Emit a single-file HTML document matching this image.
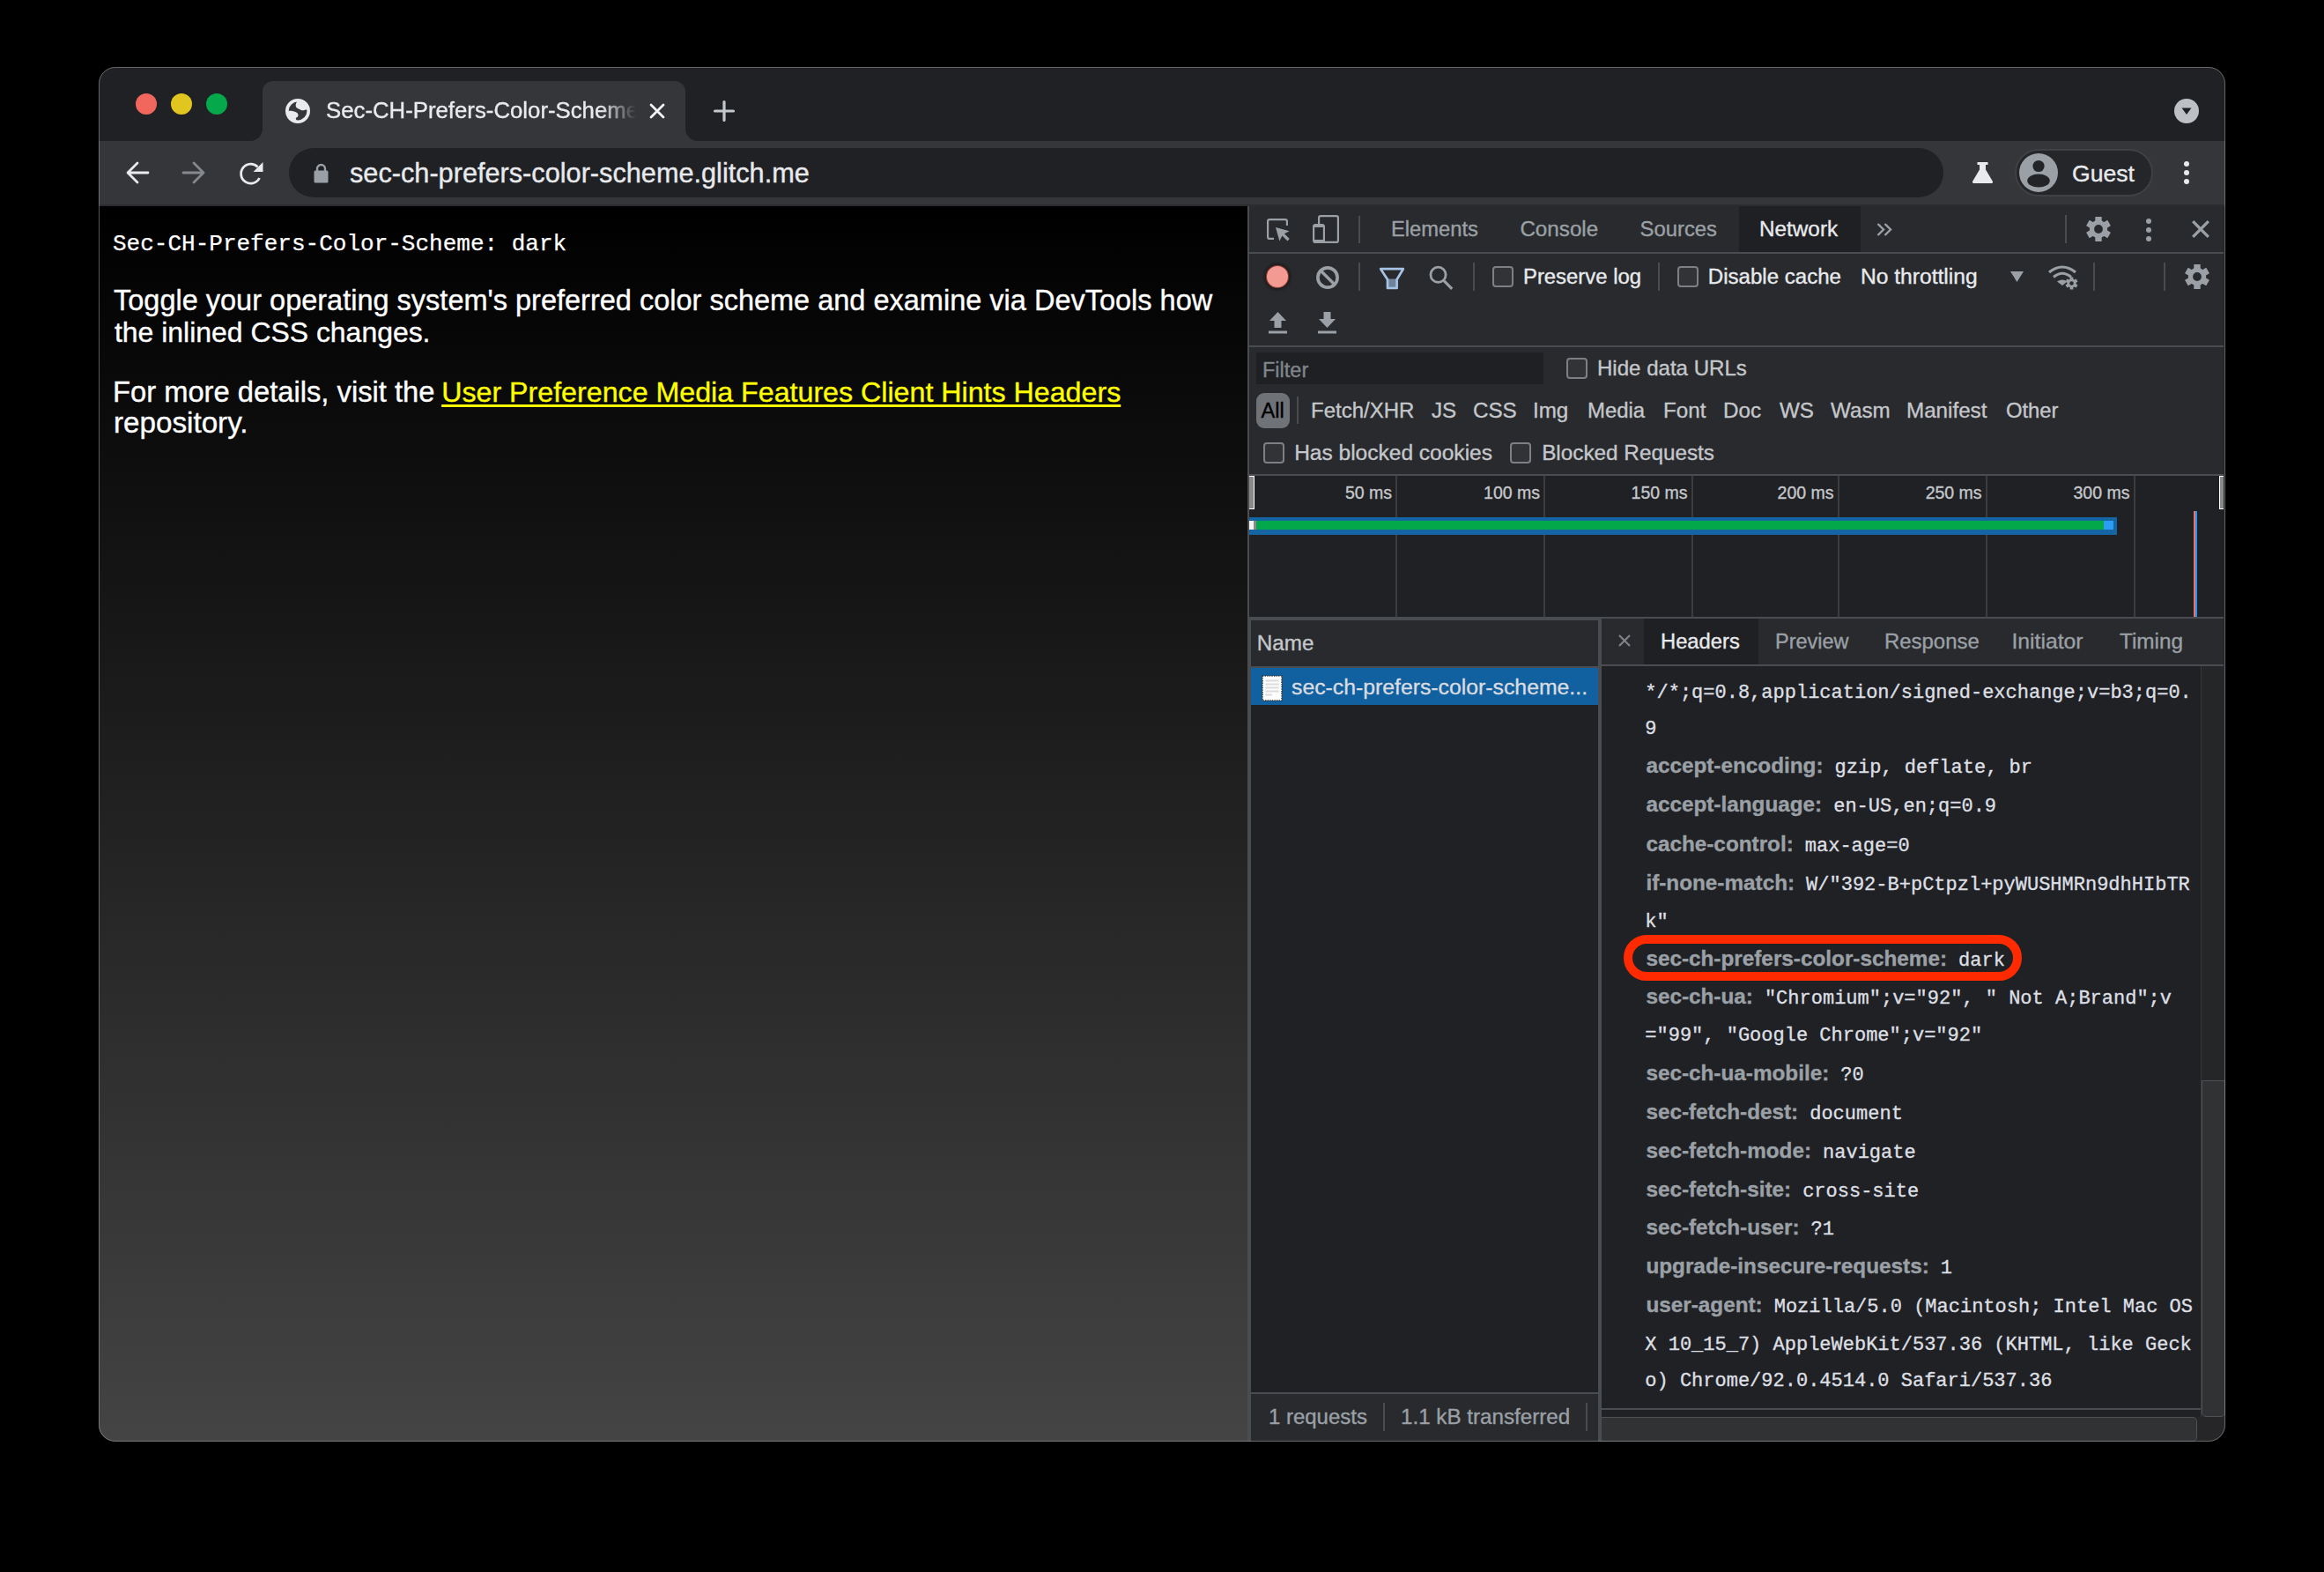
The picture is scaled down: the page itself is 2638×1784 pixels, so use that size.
<!DOCTYPE html>
<html><head><meta charset="utf-8">
<style>
*{box-sizing:border-box;margin:0;padding:0}
html,body{width:2638px;height:1784px;background:#000;overflow:hidden;font-family:'Liberation Sans',sans-serif;}
.a{position:absolute}
svg{position:absolute;overflow:visible}
#win{position:absolute;left:112px;top:76px;width:2414px;height:1560px;border-radius:19px;overflow:hidden;background:#202124}
#in{position:absolute;left:-112px;top:-76px;width:2638px;height:1784px}
#winborder{position:absolute;left:112px;top:76px;width:2414px;height:1560px;border-radius:19px;border:1.5px solid rgba(170,170,170,.5);pointer-events:none}
.t{position:absolute;white-space:nowrap;line-height:1;-webkit-text-stroke:0.35px currentColor}
.mk{display:inline-block;width:0;height:0}
</style></head><body>
<div id="win"><div id="in">
<div class="a" style="left:112px;top:76px;width:2414px;height:84px;background:#202124;"></div>
<div class="a" style="left:154px;top:106px;width:24px;height:24px;background:#f2675d;border-radius:50%"></div>
<div class="a" style="left:194px;top:106px;width:24px;height:24px;background:#e1c61f;border-radius:50%"></div>
<div class="a" style="left:234px;top:106px;width:24px;height:24px;background:#05a84a;border-radius:50%"></div>
<div class="a" style="left:284px;top:146px;width:14px;height:14px;background:radial-gradient(circle at 0 0, #202124 13.6px, #35363a 14.4px);"></div>
<div class="a" style="left:778px;top:146px;width:14px;height:14px;background:radial-gradient(circle at 100% 0, #202124 13.6px, #35363a 14.4px);"></div>
<div class="a" style="left:298px;top:92px;width:480px;height:68px;background:#35363a;border-radius:12px 12px 0 0"></div>
<svg style="left:324px;top:112px" width="28" height="28" viewBox="0 0 28 28"><circle cx="14" cy="14" r="12.2" fill="none" stroke="#e8eaed" stroke-width="3.6"/>
<path d="M14.5 2 C12.6 3.6 11.2 6.2 11.8 8.8 C12.3 10.8 14.5 11.2 16 12 C17.5 12.8 18.8 13.6 20.6 13.2 C22.2 12.9 23.6 12 26 12 A12 12 0 0 0 14.5 2 Z" fill="#e8eaed"/>
<path d="M2 13.8 C6 13.6 11 14 13.2 16 C15 17.5 15 20.5 12.8 21.3 C11.5 21.8 11.4 23.2 12.6 24.2 L14 26 A12 12 0 0 1 2 13.8 Z" fill="#e8eaed"/></svg>
<div class="t" id="t1" style="left:370.00px;top:113.00px;font-family:'Liberation Sans',sans-serif;font-size:25.77px;font-weight:400;color:#e8eaed;width:352px;overflow:hidden;-webkit-mask-image:linear-gradient(90deg,#000 0,#000 312px,rgba(0,0,0,.25) 342px,transparent 352px)">Sec-CH-Prefers-Color-Scheme</div>
<svg style="left:737px;top:117px" width="18" height="18" viewBox="0 0 18 18"><path d="M2 2 L16 16 M16 2 L2 16" stroke="#f1f3f4" stroke-width="2.8" stroke-linecap="round"/></svg>
<svg style="left:810px;top:114px" width="24" height="24" viewBox="0 0 24 24"><path d="M12 1.5 V22.5 M1.5 12 H22.5" stroke="#c4c7cb" stroke-width="3.2" stroke-linecap="round"/></svg>
<div class="a" style="left:2468px;top:112px;width:28px;height:28px;background:#bdc1c6;border-radius:50%"></div>
<svg style="left:2468px;top:112px" width="28" height="28" viewBox="0 0 28 28"><path d="M8.5 10.5 H19.5 L14 18 Z" fill="#202124"/></svg>
<div class="a" style="left:112px;top:160px;width:2414px;height:74px;background:#35363a;"></div>
<div class="a" style="left:112px;top:232px;width:2414px;height:2px;background:#2b2c2f;"></div>
<svg style="left:143px;top:183px" width="26" height="26" viewBox="0 0 26 26"><path d="M25 13 H3 M13 2 L2 13 L13 24" fill="none" stroke="#e8eaed" stroke-width="2.8" stroke-linecap="round" stroke-linejoin="round"/></svg>
<svg style="left:207px;top:183px" width="26" height="26" viewBox="0 0 26 26"><path d="M1 13 H23 M13 2 L24 13 L13 24" fill="none" stroke="#85888c" stroke-width="2.8" stroke-linecap="round" stroke-linejoin="round"/></svg>
<svg style="left:271px;top:183px" width="28" height="27" viewBox="0 0 28 27"><path d="M23.5 19 A11 11 0 1 1 21.5 6.5" fill="none" stroke="#e8eaed" stroke-width="2.8"/><path d="M27.5 1 V12 H16.5 Z" fill="#e8eaed"/></svg>
<div class="a" style="left:328px;top:168px;width:1878px;height:56px;background:#202124;border-radius:28px"></div>
<svg style="left:356px;top:185px" width="17" height="23" viewBox="0 0 17 23"><path d="M4 9 V6.5 A4.5 4.5 0 0 1 13 6.5 V9" fill="none" stroke="#9aa0a6" stroke-width="2.4"/><rect x="0.5" y="8.5" width="16" height="14" rx="1.5" fill="#9aa0a6"/></svg>
<div class="t" id="t2" style="left:397.00px;top:181.51px;font-family:'Liberation Sans',sans-serif;font-size:30.70px;font-weight:400;color:#e8eaed;">sec-ch-prefers-color-scheme.glitch.me</div>
<svg style="left:2238px;top:183px" width="25" height="26" viewBox="0 0 25 26"><path d="M6.5 1 H18.5 V4 H16 V9.5 L24 23 Q24.6 25 22.6 25 H2.4 Q0.4 25 1 23 L9 9.5 V4 H6.5 Z" fill="#e8eaed"/></svg>
<div class="a" style="left:2287px;top:169px;width:157px;height:54px;background:#252629;border-radius:27px;border:2.2px solid #404145"></div>
<svg style="left:2292px;top:174px" width="44" height="44" viewBox="0 0 44 44"><circle cx="22" cy="22" r="22" fill="#9aa0a6"/><circle cx="22" cy="14.5" r="6.6" fill="#232427"/><ellipse cx="22" cy="31" rx="12.8" ry="7.6" fill="#232427"/></svg>
<div class="t" id="t3" style="left:2352.00px;top:184.01px;font-family:'Liberation Sans',sans-serif;font-size:26.60px;font-weight:400;color:#e8eaed;">Guest</div>
<div class="a" style="left:2479px;top:183px;width:6px;height:6px;background:#e8eaed;border-radius:50%"></div>
<div class="a" style="left:2479px;top:193px;width:6px;height:6px;background:#e8eaed;border-radius:50%"></div>
<div class="a" style="left:2479px;top:203px;width:6px;height:6px;background:#e8eaed;border-radius:50%"></div>
<div class="a" style="left:112px;top:234px;width:1304px;height:1402px;background:linear-gradient(#000,#444);"></div>
<div class="t" id="t4" style="left:128.00px;top:264.00px;font-family:'Liberation Mono',monospace;font-size:26.03px;font-weight:400;color:#fff;-webkit-text-stroke:0.25px #fff">Sec-CH-Prefers-Color-Scheme: dark</div>
<div class="t" id="t5" style="left:129.00px;top:325.00px;font-family:'Liberation Sans',sans-serif;font-size:32.50px;font-weight:400;color:#fff;">Toggle your operating system's preferred color scheme and examine via DevTools how</div>
<div class="t" id="t6" style="left:130.00px;top:362.01px;font-family:'Liberation Sans',sans-serif;font-size:31.93px;font-weight:400;color:#fff;">the inlined CSS changes.</div>
<div class="t" id="t7" style="left:127.99px;top:428.51px;font-family:'Liberation Sans',sans-serif;font-size:32.73px;font-weight:400;color:#fff;">For more details, visit the</div>
<div class="t" id="t8" style="left:501.20px;top:428.51px;font-family:'Liberation Sans',sans-serif;font-size:32.20px;font-weight:400;color:#ffff00;"><span style="text-decoration:underline;text-decoration-thickness:2.5px;text-underline-offset:2.5px">User Preference Media Features Client Hints Headers</span></div>
<div class="t" id="t9" style="left:128.98px;top:462.80px;font-family:'Liberation Sans',sans-serif;font-size:33.21px;font-weight:400;color:#fff;">repository.</div>
<div class="a" style="left:1416px;top:234px;width:1110px;height:1402px;background:#202124;"></div>
<div class="a" style="left:1416px;top:234px;width:2px;height:1402px;background:#4a4c50;"></div>
<div class="a" style="left:1418px;top:234px;width:1106px;height:52px;background:#292a2d;"></div>
<div class="a" style="left:1418px;top:286px;width:1106px;height:2px;background:#494c50;"></div>
<svg style="left:1438px;top:248px" width="27" height="28" viewBox="0 0 27 28"><path d="M8 22.9 H3.1 Q1.1 22.9 1.1 20.9 V3.1 Q1.1 1.1 3.1 1.1 H20.9 Q22.9 1.1 22.9 3.1 V8" fill="none" stroke="#9aa0a6" stroke-width="2.2"/><path d="M10 10 L25.6 14.2 L19.9 17.2 L25.8 23 L23.4 25.4 L17.5 19.6 L14.4 25.6 Z" fill="#9aa0a6"/></svg>
<svg style="left:1490px;top:244px" width="31" height="33" viewBox="0 0 31 33"><rect x="7.1" y="1.1" width="21.8" height="29.8" rx="2" fill="none" stroke="#9aa0a6" stroke-width="2.2"/><rect x="1.1" y="11.1" width="11.8" height="19.8" rx="2" fill="#292a2d" stroke="#9aa0a6" stroke-width="2.2"/><rect x="1" y="11" width="12" height="3" fill="#9aa0a6"/><rect x="1" y="28" width="12" height="3" fill="#9aa0a6"/></svg>
<div class="a" style="left:1542px;top:245px;width:2px;height:31px;background:#494c50;"></div>
<div class="t" id="t10" style="left:1578.99px;top:249.21px;font-family:'Liberation Sans',sans-serif;font-size:23.74px;font-weight:400;color:#9aa0a6;">Elements</div>
<div class="t" id="t11" style="left:1725.39px;top:248.22px;font-family:'Liberation Sans',sans-serif;font-size:24.21px;font-weight:400;color:#9aa0a6;">Console</div>
<div class="t" id="t12" style="left:1861.60px;top:248.21px;font-family:'Liberation Sans',sans-serif;font-size:23.83px;font-weight:400;color:#9aa0a6;">Sources</div>
<div class="a" style="left:1974px;top:234px;width:138px;height:52px;background:#1f2023;"></div>
<div class="t" id="t13" style="left:1996.97px;top:248.22px;font-family:'Liberation Sans',sans-serif;font-size:24.32px;font-weight:400;color:#e8eaed;">Network</div>
<svg style="left:2130px;top:253px" width="18" height="15" viewBox="0 0 18 15"><path d="M1.5 1 L8 7.5 L1.5 14 M9.5 1 L16 7.5 L9.5 14" fill="none" stroke="#9aa0a6" stroke-width="2.4"/></svg>
<div class="a" style="left:2344px;top:244px;width:2px;height:32px;background:#494c50;"></div>
<svg style="left:2368px;top:246px" width="28" height="28" viewBox="0 0 28 28"><g transform="translate(14,14)" fill="#9aa0a6"><circle r="10.2"/><rect x="-3.7" y="-14" width="7.4" height="8" rx="0.6" transform="rotate(0)"/><rect x="-3.7" y="-14" width="7.4" height="8" rx="0.6" transform="rotate(60)"/><rect x="-3.7" y="-14" width="7.4" height="8" rx="0.6" transform="rotate(120)"/><rect x="-3.7" y="-14" width="7.4" height="8" rx="0.6" transform="rotate(180)"/><rect x="-3.7" y="-14" width="7.4" height="8" rx="0.6" transform="rotate(240)"/><rect x="-3.7" y="-14" width="7.4" height="8" rx="0.6" transform="rotate(300)"/><circle r="4.9" fill="#292a2d"/></g></svg>
<div class="a" style="left:2436px;top:248px;width:6px;height:6px;background:#9aa0a6;border-radius:50%"></div>
<div class="a" style="left:2436px;top:258px;width:6px;height:6px;background:#9aa0a6;border-radius:50%"></div>
<div class="a" style="left:2436px;top:268px;width:6px;height:6px;background:#9aa0a6;border-radius:50%"></div>
<svg style="left:2488px;top:250px" width="20" height="20" viewBox="0 0 20 20"><path d="M1.2 1.2 L18.8 18.8 M18.8 1.2 L1.2 18.8" stroke="#9aa0a6" stroke-width="3.3"/></svg>
<div class="a" style="left:1418px;top:288px;width:1106px;height:104px;background:#292a2d;"></div>
<div class="a" style="left:1418px;top:392px;width:1106px;height:2px;background:#494c50;"></div>
<div class="a" style="left:1432px;top:296px;width:36px;height:36px;background:radial-gradient(circle, rgba(20,20,22,.9) 0, rgba(20,20,22,.6) 50%, rgba(20,20,22,0) 70%);border-radius:50%"></div>
<div class="a" style="left:1438px;top:302px;width:24px;height:24px;background:#f39a93;border-radius:50%;box-shadow:0 0 0 1px rgba(230,80,70,.6)"></div>
<svg style="left:1494px;top:302px" width="26" height="26" viewBox="0 0 26 26"><circle cx="13" cy="13" r="11.1" fill="none" stroke="#9aa0a6" stroke-width="3.7"/><path d="M5.2 5.2 L20.8 20.8" stroke="#9aa0a6" stroke-width="3.5"/></svg>
<div class="a" style="left:1542px;top:298px;width:2px;height:32px;background:#494c50;"></div>
<svg style="left:1564px;top:302px" width="32" height="28" viewBox="0 0 32 28"><rect x="10.6" y="14.5" width="11.4" height="10.6" fill="#71839b"/><path d="M3.2 3.2 H28.8 L21.6 15.2 V25 H11 V15.2 Z" fill="none" stroke="#a6c2e4" stroke-width="2.7" stroke-linejoin="round"/></svg>
<svg style="left:1622px;top:302px" width="28" height="28" viewBox="0 0 28 28"><circle cx="10.5" cy="9.8" r="8.6" fill="none" stroke="#9aa0a6" stroke-width="2.8"/><path d="M16.8 16.3 L26.2 25.9" stroke="#9aa0a6" stroke-width="3.1"/></svg>
<div class="a" style="left:1672px;top:298px;width:2px;height:32px;background:#494c50;"></div>
<div class="a" style="left:1694px;top:302px;width:24px;height:24px;background:#323336;border:2px solid #7c8085;border-radius:4px"></div>
<div class="t" id="t14" style="left:1728.98px;top:302.00px;font-family:'Liberation Sans',sans-serif;font-size:23.88px;font-weight:400;color:#e8eaed;">Preserve log</div>
<div class="a" style="left:1882px;top:298px;width:2px;height:32px;background:#494c50;"></div>
<div class="a" style="left:1904px;top:302px;width:24px;height:24px;background:#323336;border:2px solid #7c8085;border-radius:4px"></div>
<div class="t" id="t15" style="left:1938.76px;top:302.01px;font-family:'Liberation Sans',sans-serif;font-size:24.08px;font-weight:400;color:#e8eaed;">Disable cache</div>
<div class="t" id="t16" style="left:2111.95px;top:302.01px;font-family:'Liberation Sans',sans-serif;font-size:24.63px;font-weight:400;color:#e8eaed;">No throttling</div>
<svg style="left:2282px;top:308px" width="15" height="12" viewBox="0 0 15 12"><path d="M0 0 H15 L7.5 12 Z" fill="#9aa0a6"/></svg>
<svg style="left:2324px;top:300px" width="35" height="29" viewBox="0 0 35 29"><path d="M2 9 Q17 -3 32 9" fill="none" stroke="#9aa0a6" stroke-width="3"/><path d="M7 14.5 Q17 6 27 14.5" fill="none" stroke="#9aa0a6" stroke-width="3"/><path d="M11 19.5 L17 24 L22.5 19.5 Q17 15.5 11 19.5 Z" fill="#9aa0a6"/><g transform="translate(27.5,21.5) scale(0.5)" fill="#9aa0a6"><circle r="10.2"/><rect x="-3.7" y="-14" width="7.4" height="8" rx="0.6" transform="rotate(0)"/><rect x="-3.7" y="-14" width="7.4" height="8" rx="0.6" transform="rotate(60)"/><rect x="-3.7" y="-14" width="7.4" height="8" rx="0.6" transform="rotate(120)"/><rect x="-3.7" y="-14" width="7.4" height="8" rx="0.6" transform="rotate(180)"/><rect x="-3.7" y="-14" width="7.4" height="8" rx="0.6" transform="rotate(240)"/><rect x="-3.7" y="-14" width="7.4" height="8" rx="0.6" transform="rotate(300)"/><circle r="4.6" fill="#292a2d"/></g></svg>
<div class="a" style="left:2376px;top:298px;width:2px;height:32px;background:#494c50;"></div>
<div class="a" style="left:2456px;top:298px;width:2px;height:32px;background:#494c50;"></div>
<svg style="left:2480px;top:300px" width="28" height="28" viewBox="0 0 28 28"><g transform="translate(14,14)" fill="#9aa0a6"><circle r="10.2"/><rect x="-3.7" y="-14" width="7.4" height="8" rx="0.6" transform="rotate(0)"/><rect x="-3.7" y="-14" width="7.4" height="8" rx="0.6" transform="rotate(60)"/><rect x="-3.7" y="-14" width="7.4" height="8" rx="0.6" transform="rotate(120)"/><rect x="-3.7" y="-14" width="7.4" height="8" rx="0.6" transform="rotate(180)"/><rect x="-3.7" y="-14" width="7.4" height="8" rx="0.6" transform="rotate(240)"/><rect x="-3.7" y="-14" width="7.4" height="8" rx="0.6" transform="rotate(300)"/><circle r="4.9" fill="#292a2d"/></g></svg>
<svg style="left:1440px;top:354px" width="21" height="25" viewBox="0 0 21 25"><path d="M10.5 0 L20 10 H14.5 V18 H6.5 V10 H1 Z" fill="#9aa0a6"/><rect x="0" y="21.5" width="21" height="3" fill="#9aa0a6"/></svg>
<svg style="left:1496px;top:354px" width="21" height="25" viewBox="0 0 21 25"><path d="M10.5 18 L20 8 H14.5 V0 H6.5 V8 H1 Z" fill="#9aa0a6"/><rect x="0" y="21.5" width="21" height="3" fill="#9aa0a6"/></svg>
<div class="a" style="left:1418px;top:394px;width:1106px;height:144px;background:#292a2d;"></div>
<div class="a" style="left:1418px;top:538px;width:1106px;height:2px;background:#494c50;"></div>
<div class="a" style="left:1426px;top:400px;width:326px;height:36px;background:#1f2023;"></div>
<div class="t" id="t17" style="left:1433.00px;top:408.70px;font-family:'Liberation Sans',sans-serif;font-size:23.50px;font-weight:400;color:#80868b;">Filter</div>
<div class="a" style="left:1778px;top:406px;width:24px;height:24px;background:#323336;border:2px solid #7c8085;border-radius:4px"></div>
<div class="t" id="t18" style="left:1812.98px;top:406.00px;font-family:'Liberation Sans',sans-serif;font-size:24.07px;font-weight:400;color:#c4c7cb;">Hide data URLs</div>
<div class="a" style="left:1426px;top:446px;width:38px;height:40px;background:#6f7276;border-radius:9px"></div>
<div class="t" id="t19" style="left:1431.50px;top:455.20px;font-family:'Liberation Sans',sans-serif;font-size:23.50px;font-weight:400;color:#000;">All</div>
<div class="a" style="left:1472px;top:450px;width:2px;height:31px;background:#494c50;"></div>
<div class="t" id="t20" style="left:1488.01px;top:454.22px;font-family:'Liberation Sans',sans-serif;font-size:23.99px;font-weight:400;color:#c4c7cb;">Fetch/XHR</div>
<div class="t" id="t21" style="left:1625.00px;top:454.21px;font-family:'Liberation Sans',sans-serif;font-size:24.20px;font-weight:400;color:#c4c7cb;">JS</div>
<div class="t" id="t22" style="left:1672.00px;top:454.21px;font-family:'Liberation Sans',sans-serif;font-size:24.20px;font-weight:400;color:#c4c7cb;">CSS</div>
<div class="t" id="t23" style="left:1740.00px;top:454.21px;font-family:'Liberation Sans',sans-serif;font-size:24.20px;font-weight:400;color:#c4c7cb;">Img</div>
<div class="t" id="t24" style="left:1802.01px;top:454.21px;font-family:'Liberation Sans',sans-serif;font-size:23.91px;font-weight:400;color:#c4c7cb;">Media</div>
<div class="t" id="t25" style="left:1888.00px;top:454.21px;font-family:'Liberation Sans',sans-serif;font-size:24.20px;font-weight:400;color:#c4c7cb;">Font</div>
<div class="t" id="t26" style="left:1956.00px;top:454.21px;font-family:'Liberation Sans',sans-serif;font-size:24.20px;font-weight:400;color:#c4c7cb;">Doc</div>
<div class="t" id="t27" style="left:2020.00px;top:454.21px;font-family:'Liberation Sans',sans-serif;font-size:24.20px;font-weight:400;color:#c4c7cb;">WS</div>
<div class="t" id="t28" style="left:2078.00px;top:454.21px;font-family:'Liberation Sans',sans-serif;font-size:24.20px;font-weight:400;color:#c4c7cb;">Wasm</div>
<div class="t" id="t29" style="left:2164.00px;top:454.21px;font-family:'Liberation Sans',sans-serif;font-size:24.20px;font-weight:400;color:#c4c7cb;">Manifest</div>
<div class="t" id="t30" style="left:2277.00px;top:454.22px;font-family:'Liberation Sans',sans-serif;font-size:23.80px;font-weight:400;color:#c4c7cb;">Other</div>
<div class="a" style="left:1434px;top:502px;width:24px;height:24px;background:#323336;border:2px solid #7c8085;border-radius:4px"></div>
<div class="t" id="t31" style="left:1469.14px;top:502.21px;font-family:'Liberation Sans',sans-serif;font-size:24.53px;font-weight:400;color:#c4c7cb;">Has blocked cookies</div>
<div class="a" style="left:1714px;top:502px;width:24px;height:24px;background:#323336;border:2px solid #7c8085;border-radius:4px"></div>
<div class="t" id="t32" style="left:1750.15px;top:502.20px;font-family:'Liberation Sans',sans-serif;font-size:24.30px;font-weight:400;color:#c4c7cb;">Blocked Requests</div>
<div class="a" style="left:1418px;top:540px;width:1106px;height:160px;background:#202124;"></div>
<div class="a" style="left:1418px;top:700px;width:1106px;height:2px;background:#494c50;"></div>
<div class="a" style="left:1418px;top:702px;width:400px;height:2px;background:#494c50;"></div>
<div class="a" style="left:1584px;top:540px;width:2px;height:160px;background:#3c3d40;"></div>
<div class="a" style="left:1752px;top:540px;width:2px;height:160px;background:#3c3d40;"></div>
<div class="a" style="left:1920px;top:540px;width:2px;height:160px;background:#3c3d40;"></div>
<div class="a" style="left:2086px;top:540px;width:2px;height:160px;background:#3c3d40;"></div>
<div class="a" style="left:2254px;top:540px;width:2px;height:160px;background:#3c3d40;"></div>
<div class="a" style="left:2422px;top:540px;width:2px;height:160px;background:#3c3d40;"></div>
<div class="t" id="t33" style="left:1580.00px;top:549.80px;font-family:'Liberation Sans',sans-serif;font-size:19.50px;font-weight:400;color:#c4c7cb;transform:translateX(-100%)">50 ms</div>
<div class="t" id="t34" style="left:1748.00px;top:549.80px;font-family:'Liberation Sans',sans-serif;font-size:19.50px;font-weight:400;color:#c4c7cb;transform:translateX(-100%)">100 ms</div>
<div class="t" id="t35" style="left:1915.50px;top:549.80px;font-family:'Liberation Sans',sans-serif;font-size:19.50px;font-weight:400;color:#c4c7cb;transform:translateX(-100%)">150 ms</div>
<div class="t" id="t36" style="left:2081.50px;top:549.80px;font-family:'Liberation Sans',sans-serif;font-size:19.50px;font-weight:400;color:#c4c7cb;transform:translateX(-100%)">200 ms</div>
<div class="t" id="t37" style="left:2249.60px;top:549.80px;font-family:'Liberation Sans',sans-serif;font-size:19.50px;font-weight:400;color:#c4c7cb;transform:translateX(-100%)">250 ms</div>
<div class="t" id="t38" style="left:2417.40px;top:549.80px;font-family:'Liberation Sans',sans-serif;font-size:19.50px;font-weight:400;color:#c4c7cb;transform:translateX(-100%)">300 ms</div>
<div class="a" style="left:1418px;top:540px;width:6px;height:38px;background:#8a8a8a;border:1.5px solid #fff;border-left:none"></div>
<div class="a" style="left:2519px;top:540px;width:5px;height:38px;background:#8a8a8a;border:1.5px solid #fff;border-right:none"></div>
<div class="a" style="left:1418px;top:587px;width:985px;height:20px;background:#1565a5;"></div>
<div class="a" style="left:1426px;top:591px;width:962px;height:10px;background:#03a84a;"></div>
<div class="a" style="left:1418px;top:591px;width:5px;height:10px;background:#f4f4f4;"></div>
<div class="a" style="left:1423px;top:591px;width:3px;height:10px;background:#8a8a8a;"></div>
<div class="a" style="left:2388px;top:591px;width:11px;height:10px;background:#2a9df4;"></div>
<div class="a" style="left:2490px;top:580px;width:2px;height:120px;background:#f27166;"></div>
<div class="a" style="left:2492px;top:580px;width:2px;height:120px;background:#2196f3;"></div>
<div class="a" style="left:1418px;top:704px;width:396px;height:52px;background:#292a2d;"></div>
<div class="a" style="left:1418px;top:756px;width:396px;height:2px;background:#494c50;"></div>
<div class="t" id="t39" style="left:1426.75px;top:717.81px;font-family:'Liberation Sans',sans-serif;font-size:24.23px;font-weight:400;color:#c4c7cb;">Name</div>
<div class="a" style="left:1418px;top:758px;width:396px;height:42px;background:#1160a0;"></div>
<svg style="left:1432px;top:766px" width="24" height="30" viewBox="0 0 24 30"><rect x="1" y="1" width="22" height="28" fill="#fdfdfd" stroke="#3a3a3a" stroke-width="1.6" stroke-dasharray="1.4 1.2"/><path d="M4.5 6.5 H19.5 M4.5 10.5 H19.5 M4.5 14.5 H19.5 M4.5 18.5 H19.5 M4.5 22.5 H12" stroke="#dcdcdc" stroke-width="2"/></svg>
<div class="t" id="t40" style="left:1466.00px;top:767.80px;font-family:'Liberation Sans',sans-serif;font-size:24.79px;font-weight:400;color:#dadce0;">sec-ch-prefers-color-scheme...</div>
<div class="a" style="left:1814px;top:702px;width:4px;height:934px;background:#494c50;"></div>
<div class="a" style="left:1418px;top:1580px;width:396px;height:2px;background:#494c50;"></div>
<div class="a" style="left:1418px;top:1582px;width:396px;height:54px;background:#292a2d;"></div>
<div class="t" id="t41" style="left:1439.98px;top:1595.72px;font-family:'Liberation Sans',sans-serif;font-size:23.97px;font-weight:400;color:#9aa0a6;">1 requests</div>
<div class="a" style="left:1570px;top:1592px;width:2px;height:32px;background:#494c50;"></div>
<div class="t" id="t42" style="left:1589.96px;top:1595.71px;font-family:'Liberation Sans',sans-serif;font-size:24.20px;font-weight:400;color:#9aa0a6;">1.1 kB transferred</div>
<div class="a" style="left:1800px;top:1592px;width:2px;height:32px;background:#494c50;"></div>
<div class="a" style="left:1818px;top:702px;width:706px;height:52px;background:#292a2d;"></div>
<div class="a" style="left:1818px;top:754px;width:706px;height:2px;background:#494c50;"></div>
<svg style="left:1837px;top:720px" width="14" height="14" viewBox="0 0 14 14"><path d="M1 1 L13 13 M13 1 L1 13" stroke="#7f8388" stroke-width="2.2"/></svg>
<div class="a" style="left:1866px;top:702px;width:130px;height:52px;background:#1f2023;"></div>
<div class="t" id="t43" style="left:1884.99px;top:715.81px;font-family:'Liberation Sans',sans-serif;font-size:23.77px;font-weight:400;color:#e8eaed;">Headers</div>
<div class="t" id="t44" style="left:2015.00px;top:716.80px;font-family:'Liberation Sans',sans-serif;font-size:23.50px;font-weight:400;color:#9aa0a6;">Preview</div>
<div class="t" id="t45" style="left:2138.98px;top:715.81px;font-family:'Liberation Sans',sans-serif;font-size:23.95px;font-weight:400;color:#9aa0a6;">Response</div>
<div class="t" id="t46" style="left:2283.42px;top:715.80px;font-family:'Liberation Sans',sans-serif;font-size:24.74px;font-weight:400;color:#9aa0a6;">Initiator</div>
<div class="t" id="t47" style="left:2406.00px;top:715.81px;font-family:'Liberation Sans',sans-serif;font-size:24.32px;font-weight:400;color:#9aa0a6;">Timing</div>
<div class="t" id="t48" style="left:1867.30px;top:776.31px;font-family:'Liberation Mono',monospace;font-size:22.00px;font-weight:400;color:#dcdfe3;">*/*;q=0.8,application/signed-exchange;v=b3;q=0.</div>
<div class="t" id="t49" style="left:1867.30px;top:817.01px;font-family:'Liberation Mono',monospace;font-size:22.00px;font-weight:400;color:#dcdfe3;">9</div>
<div class="t" id="t50" style="left:1868.40px;top:857.32px;font-family:'Liberation Sans',sans-serif;font-size:24.30px;font-weight:700;color:#9aa0a6;">accept-encoding:<span style="font-family:'Liberation Mono',monospace;font-size:22px;font-weight:400;color:#dcdfe3;margin-left:13px">gzip, deflate, br</span></div>
<div class="t" id="t51" style="left:1868.40px;top:901.41px;font-family:'Liberation Sans',sans-serif;font-size:24.30px;font-weight:700;color:#9aa0a6;">accept-language:<span style="font-family:'Liberation Mono',monospace;font-size:22px;font-weight:400;color:#dcdfe3;margin-left:13px">en-US,en;q=0.9</span></div>
<div class="t" id="t52" style="left:1868.40px;top:945.51px;font-family:'Liberation Sans',sans-serif;font-size:24.30px;font-weight:700;color:#9aa0a6;">cache-control:<span style="font-family:'Liberation Mono',monospace;font-size:22px;font-weight:400;color:#dcdfe3;margin-left:13px">max-age=0</span></div>
<div class="t" id="t53" style="left:1868.40px;top:989.60px;font-family:'Liberation Sans',sans-serif;font-size:24.30px;font-weight:700;color:#9aa0a6;">if-none-match:<span style="font-family:'Liberation Mono',monospace;font-size:22px;font-weight:400;color:#dcdfe3;margin-left:13px">W/"392-B+pCtpzl+pyWUSHMRn9dhHIbTR</span></div>
<div class="t" id="t54" style="left:1867.30px;top:1035.51px;font-family:'Liberation Mono',monospace;font-size:22.00px;font-weight:400;color:#dcdfe3;">k"</div>
<div class="t" id="t55" style="left:1868.40px;top:1075.60px;font-family:'Liberation Sans',sans-serif;font-size:24.30px;font-weight:700;color:#9aa0a6;">sec-ch-prefers-color-scheme:<span style="font-family:'Liberation Mono',monospace;font-size:22px;font-weight:400;color:#dcdfe3;margin-left:13px">dark</span></div>
<div class="t" id="t56" style="left:1868.40px;top:1119.32px;font-family:'Liberation Sans',sans-serif;font-size:24.30px;font-weight:700;color:#9aa0a6;">sec-ch-ua:<span style="font-family:'Liberation Mono',monospace;font-size:22px;font-weight:400;color:#dcdfe3;margin-left:13px">"Chromium";v="92", " Not A;Brand";v</span></div>
<div class="t" id="t57" style="left:1867.30px;top:1165.01px;font-family:'Liberation Mono',monospace;font-size:22.00px;font-weight:400;color:#dcdfe3;">="99", "Google Chrome";v="92"</div>
<div class="t" id="t58" style="left:1868.40px;top:1206.01px;font-family:'Liberation Sans',sans-serif;font-size:24.30px;font-weight:700;color:#9aa0a6;">sec-ch-ua-mobile:<span style="font-family:'Liberation Mono',monospace;font-size:22px;font-weight:400;color:#dcdfe3;margin-left:13px">?0</span></div>
<div class="t" id="t59" style="left:1868.40px;top:1249.51px;font-family:'Liberation Sans',sans-serif;font-size:24.30px;font-weight:700;color:#9aa0a6;">sec-fetch-dest:<span style="font-family:'Liberation Mono',monospace;font-size:22px;font-weight:400;color:#dcdfe3;margin-left:13px">document</span></div>
<div class="t" id="t60" style="left:1868.40px;top:1293.51px;font-family:'Liberation Sans',sans-serif;font-size:24.30px;font-weight:700;color:#9aa0a6;">sec-fetch-mode:<span style="font-family:'Liberation Mono',monospace;font-size:22px;font-weight:400;color:#dcdfe3;margin-left:13px">navigate</span></div>
<div class="t" id="t61" style="left:1868.40px;top:1338.01px;font-family:'Liberation Sans',sans-serif;font-size:24.30px;font-weight:700;color:#9aa0a6;">sec-fetch-site:<span style="font-family:'Liberation Mono',monospace;font-size:22px;font-weight:400;color:#dcdfe3;margin-left:13px">cross-site</span></div>
<div class="t" id="t62" style="left:1868.40px;top:1381.41px;font-family:'Liberation Sans',sans-serif;font-size:24.30px;font-weight:700;color:#9aa0a6;">sec-fetch-user:<span style="font-family:'Liberation Mono',monospace;font-size:22px;font-weight:400;color:#dcdfe3;margin-left:13px">?1</span></div>
<div class="t" id="t63" style="left:1868.40px;top:1425.41px;font-family:'Liberation Sans',sans-serif;font-size:24.30px;font-weight:700;color:#9aa0a6;">upgrade-insecure-requests:<span style="font-family:'Liberation Mono',monospace;font-size:22px;font-weight:400;color:#dcdfe3;margin-left:13px">1</span></div>
<div class="t" id="t64" style="left:1868.40px;top:1469.41px;font-family:'Liberation Sans',sans-serif;font-size:24.30px;font-weight:700;color:#9aa0a6;">user-agent:<span style="font-family:'Liberation Mono',monospace;font-size:22px;font-weight:400;color:#dcdfe3;margin-left:13px">Mozilla/5.0 (Macintosh; Intel Mac OS</span></div>
<div class="t" id="t65" style="left:1867.30px;top:1516.20px;font-family:'Liberation Mono',monospace;font-size:22.00px;font-weight:400;color:#dcdfe3;">X 10_15_7) AppleWebKit/537.36 (KHTML, like Geck</div>
<div class="t" id="t66" style="left:1867.30px;top:1557.41px;font-family:'Liberation Mono',monospace;font-size:22.00px;font-weight:400;color:#dcdfe3;">o) Chrome/92.0.4514.0 Safari/537.36</div>
<div class="a" style="left:1843px;top:1061px;width:452px;height:52px;background:transparent;border:10px solid #ff2a00;border-radius:26px"></div>
<div class="a" style="left:2498px;top:756px;width:28px;height:852px;background:#252628;border-left:1.5px solid #38393c"></div>
<div class="a" style="left:2498.5px;top:1226px;width:27px;height:382px;background:#313234;border:1.5px solid #4f5054;border-radius:0 0 5px 5px"></div>
<div class="a" style="left:1818px;top:1598px;width:680px;height:2px;background:#494c50;"></div>
<div class="a" style="left:1818px;top:1608px;width:676px;height:28px;background:#313234;border:1.5px solid #4f5054;border-left:none;border-radius:0 5px 5px 0"></div>
<div class="a" style="left:2494px;top:1608px;width:4px;height:28px;background:#252628;"></div>
<div class="a" style="left:2498px;top:1608px;width:28px;height:28px;background:#262628;"></div>
<div class="a" style="left:1418px;top:704px;width:2px;height:932px;background:#494c50;"></div>
</div></div>
<div id="winborder"></div>
</body></html>
